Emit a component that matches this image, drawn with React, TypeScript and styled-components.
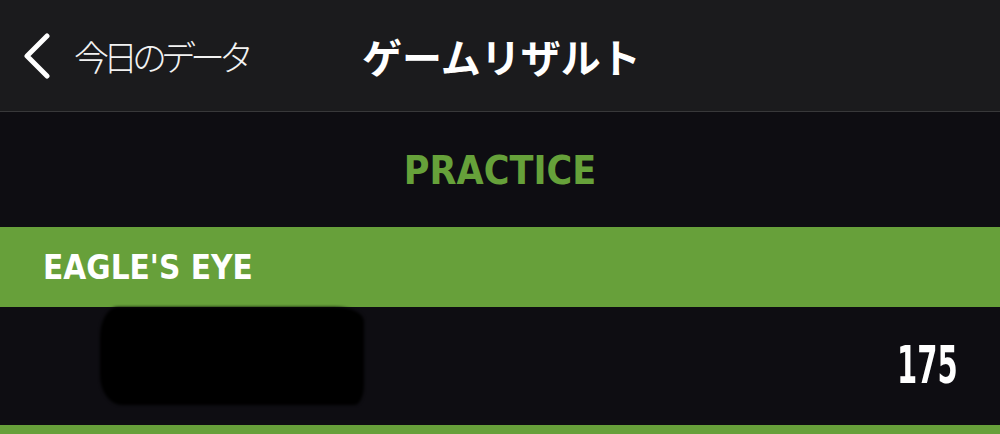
import styled, { createGlobalStyle } from "styled-components";

const GlobalStyle = createGlobalStyle`
  html, body {
    margin: 0;
    padding: 0;
    background: #0e0d12;
  }
  body {
    font-family: "Noto Sans CJK JP", "Noto Sans", sans-serif;
    overflow: hidden;
  }
`;

const Screen = styled.div`
  width: 1000px;
  height: 434px;
  display: flex;
  flex-direction: column;
  background: #0e0d12;
  overflow: hidden;
`;

const NavBar = styled.header`
  height: 112px;
  flex-shrink: 0;
  box-sizing: border-box;
  display: flex;
  align-items: center;
  padding-left: 22px;
  background: #1b1b1d;
  border-bottom: 1px solid #38383a;
`;

const BackButton = styled.button`
  display: flex;
  align-items: center;
  gap: 22px;
  background: none;
  border: none;
  padding: 0;
  color: #ffffff;
  cursor: pointer;
`;

const BackLabel = styled.span`
  font-family: "Noto Sans CJK JP", sans-serif;
  font-size: 35px;
  font-weight: 300;
  letter-spacing: -6px;
  color: #f2f2f2;
`;

const TitleSlot = styled.div<{ $offset: number }>`
  flex: 1;
  display: flex;
  padding-left: ${(p) => p.$offset}px;
`;

const NavTitle = styled.h1`
  margin: 0;
  font-family: "Noto Sans CJK JP", sans-serif;
  font-size: 40px;
  font-weight: 700;
  color: #ffffff;
`;

const ModeHeading = styled.div`
  height: 114px;
  flex-shrink: 0;
  display: flex;
  align-items: center;
  justify-content: center;
  font-family: "DejaVu Sans Condensed", "DejaVu Sans", sans-serif;
  font-stretch: condensed;
  font-weight: 700;
  font-size: 39px;
  color: #66a13a;
  padding-top: 1px;
`;

const SectionBar = styled.div`
  height: 80px;
  flex-shrink: 0;
  display: flex;
  align-items: center;
  padding-left: 43px;
  background: #67a03a;
  font-family: "DejaVu Sans Condensed", "DejaVu Sans", sans-serif;
  font-stretch: condensed;
  font-weight: 700;
  font-size: 33px;
  color: #ffffff;
`;

const ResultRow = styled.div`
  height: 118px;
  flex-shrink: 0;
  display: flex;
  align-items: center;
  justify-content: space-between;
  padding: 0 42px 0 100px;
  background: #0e0d12;
`;

const Redaction = styled.div`
  width: 264px;
  height: 98px;
  margin-top: -20px;
  background: #000000;
  border-radius: 18px 30px 10px 22px / 30px 14px 20px 30px;
  filter: blur(1.5px);
`;

const Score = styled.span`
  display: inline-block;
  font-family: "DejaVu Sans Condensed", "DejaVu Sans", sans-serif;
  font-weight: 700;
  font-size: 52px;
  color: #ffffff;
  transform: scaleX(0.62);
  transform-origin: right center;
  margin-top: -2px;
`;

const NextBar = styled.div`
  flex: 1;
  background: #67a03a;
`;

const Chevron = () => (
  <svg width="30" height="46" viewBox="0 0 30 46" fill="none">
    <path
      d="M25 3 L5 23 L25 43"
      stroke="#ffffff"
      strokeWidth="5"
      strokeLinecap="round"
      strokeLinejoin="round"
    />
  </svg>
);

const App = () => {
  return (
    <>
      <GlobalStyle />
      <Screen>
        <NavBar>
          <BackButton>
            <Chevron />
            <BackLabel>今日のデータ</BackLabel>
          </BackButton>
          <TitleSlot $offset={114}>
            <NavTitle>ゲームリザルト</NavTitle>
          </TitleSlot>
        </NavBar>
        <ModeHeading>PRACTICE</ModeHeading>
        <SectionBar>EAGLE'S EYE</SectionBar>
        <ResultRow>
          <Redaction />
          <Score>175</Score>
        </ResultRow>
        <NextBar />
      </Screen>
    </>
  );
};

export default App;
